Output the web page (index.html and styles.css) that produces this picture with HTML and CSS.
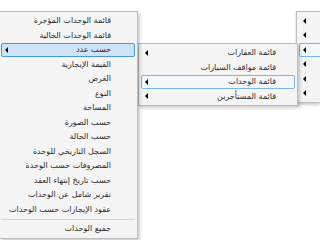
FILE: index.html
```html
<!DOCTYPE html>
<html lang="ar">
<head>
    <meta charset="UTF-8">
    <title>قائمة الوحدات</title>
    <link rel="stylesheet" href="styles.css">
</head>
<body>
    <div class="menu menu-root">
        <div class="item"><span class="arrow"></span></div>
        <div class="item"><span class="arrow"></span></div>
        <div class="item open"><span class="arrow"></span></div>
        <div class="item"><span class="arrow"></span></div>
        <div class="item"><span class="arrow"></span></div>
        <div class="item"><span class="arrow"></span></div>
    </div>

    <div class="menu menu-lists">
        <div class="item"><span class="label">قائمة العقارات</span><span class="arrow"></span></div>
        <div class="item"><span class="label">قائمة مواقف السيارات</span></div>
        <div class="item open"><span class="label">قائمة الوحدات</span><span class="arrow"></span></div>
        <div class="item"><span class="label">قائمة المستأجرين</span><span class="arrow"></span></div>
    </div>

    <div class="menu menu-units">
        <div class="item"><span class="label">قائمة الوحدات المؤجرة</span></div>
        <div class="item"><span class="label">قائمة الوحدات الخالية</span></div>
        <div class="item hover"><span class="label">حسب عدد</span><span class="arrow"></span></div>
        <div class="item"><span class="label">القيمة الإيجارية</span></div>
        <div class="item"><span class="label">الغرض</span></div>
        <div class="item"><span class="label">النوع</span></div>
        <div class="item"><span class="label">المساحة</span></div>
        <div class="item"><span class="label">حسب الصورة</span></div>
        <div class="item"><span class="label">حسب الحالة</span></div>
        <div class="item"><span class="label">السجل التاريخي للوحدة</span></div>
        <div class="item"><span class="label">المصروفات حسب الوحدة</span></div>
        <div class="item"><span class="label">حسب تاريخ إنتهاء العقد</span></div>
        <div class="item"><span class="label">تقرير شامل عن الوحدات</span></div>
        <div class="item"><span class="label">عقود الإيجارات حسب الوحدات</span></div>
        <div class="separator"></div>
        <div class="item"><span class="label">جميع الوحدات</span></div>
    </div>
</body>
</html>
```

FILE: styles.css
```css
body {
    margin: 0;
    width: 320px;
    height: 240px;
    position: relative;
    overflow: hidden;
    background-color: #fff;
    font-family: "DejaVu Sans", sans-serif;
    font-size: 8px;
    color: #2a2a2a;
}

/* popup menus float over the page */
.menu {
    position: absolute;
    box-sizing: border-box;
    direction: rtl;
    background-color: #f5f5f5;
    border: 1px solid #bcbcbc;
    padding: 1.5px 2px;
    box-shadow: 2px 2px 3px rgba(0, 0, 0, 0.2);
}

/* the parent menu is cut by the right edge of the screen */
.menu-root {
    left: 296px;
    top: 11px;
    width: 24px;
    border-right: none;
    padding-right: 0;
    box-shadow: 0 2px 3px rgba(0, 0, 0, 0.2);
}

.menu-lists {
    left: 138px;
    top: 43px;
    width: 160px;
}

/* the deepest submenu starts at the left edge */
.menu-units {
    left: 0;
    top: 11px;
    width: 138px;
    border-left: none;
    padding-left: 1px;
}

.item {
    box-sizing: border-box;
    height: 14.5px;
    display: flex;
    align-items: center;
    padding-left: 3px;
    border: 1px solid transparent;
    border-radius: 2px;
    white-space: nowrap;
}

.menu-root .item {
    border-right: none;
    border-radius: 2px 0 0 2px;
}

.menu-lists .item {
    padding-right: 18px;
}

.menu-units .item {
    padding-right: 23px;
}

.item.open {
    background-color: #f3f8fd;
    border-color: #7eb4ea;
}

.item.hover {
    background-color: #cde4f8;
    border-color: #4a95de;
}

.arrow {
    width: 0;
    height: 0;
    margin-right: auto;
    border-top: 3px solid transparent;
    border-bottom: 3px solid transparent;
    border-right: 3px solid #000;
}

.separator {
    height: 1px;
    margin: 2px 0;
    background-color: #d3d3d3;
}
```
